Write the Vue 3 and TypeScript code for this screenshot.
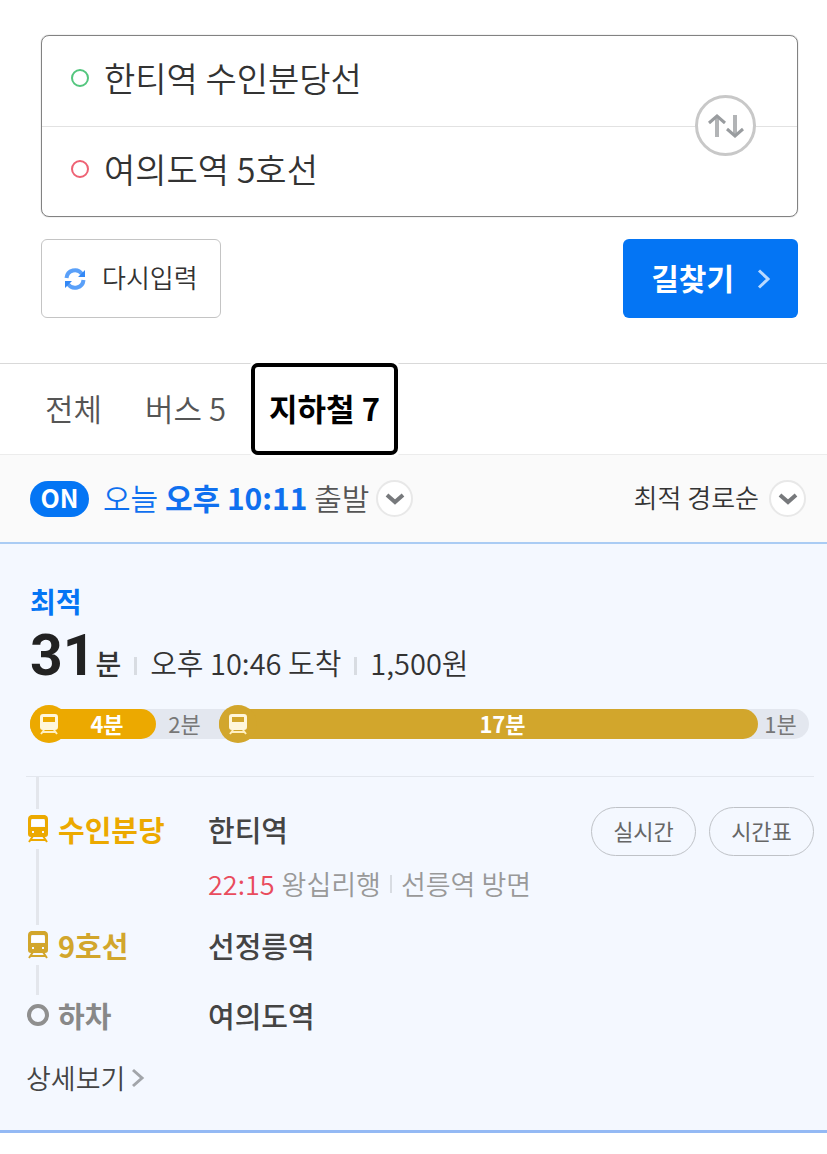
<script setup lang="ts">
import { ref } from 'vue'

interface Segment {
  kind: 'train' | 'walk'
  minutes: number
  share: number
  line?: string
}

interface Step {
  kind: 'train' | 'end'
  label: string
  station: string
  line: string
}

const origin = ref('한티역 수인분당선')
const destination = ref('여의도역 5호선')
const activeTab = ref('subway')

const tabs = [
  { id: 'all', label: '전체' },
  { id: 'bus', label: '버스 5' },
  { id: 'subway', label: '지하철 7' },
]

const segments: Segment[] = [
  { kind: 'train', minutes: 4, share: 126, line: 'suin' },
  { kind: 'walk', minutes: 2, share: 63 },
  { kind: 'train', minutes: 17, share: 539, line: 'nine' },
  { kind: 'walk', minutes: 1, share: 51 },
]

const steps: Step[] = [
  { kind: 'train', label: '수인분당', station: '한티역', line: 'suin' },
  { kind: 'train', label: '9호선', station: '선정릉역', line: 'nine' },
  { kind: 'end', label: '하차', station: '여의도역', line: 'end' },
]

function swap() {
  const previous = origin.value
  origin.value = destination.value
  destination.value = previous
}

function reset() {
  origin.value = ''
  destination.value = ''
}
</script>

<template>
  <main class="page">
    <form class="search" @submit.prevent>
      <div class="fields">
        <label class="field">
          <span class="ring start"></span>
          <input v-model="origin" type="text" aria-label="출발지" />
        </label>
        <label class="field">
          <span class="ring goal"></span>
          <input v-model="destination" type="text" aria-label="도착지" />
        </label>
        <button class="swap" type="button" aria-label="출발지와 도착지 바꾸기" @click="swap">
          <svg width="36" height="26" viewBox="0 0 36 26" fill="none" stroke-width="4">
            <path d="M9 3V24M27 2V23" stroke="#b2b4b6" />
            <path d="M1 10L9 3L17 10M19 16L27 23L35 16" stroke="#999c9f" stroke-width="3" />
          </svg>
        </button>
      </div>
      <div class="actions">
        <button class="reset" type="button" @click="reset">
          <svg width="22" height="22" viewBox="0 0 22 22" fill="none">
            <path d="M2.5 10A8.5 8.5 0 0 1 18 6M19.500 12A8.500 8.500 0 0 1 4 16" stroke="#5aa0f9" stroke-width="4" />
            <path d="M21 2V9H14ZM1 20V13H8Z" fill="#3388f6" />
          </svg>
          <span class="caption">다시입력</span>
        </button>
        <button class="find" type="submit">
          <span class="caption">길찾기</span>
          <svg width="14" height="20" viewBox="0 0 14 20" fill="none">
            <path d="M2 1.500L11 10L2 18.500" stroke="#b9d9ff" stroke-width="3" />
          </svg>
        </button>
      </div>
    </form>

    <nav class="tabs">
      <button
        v-for="tab in tabs"
        :key="tab.id"
        type="button"
        class="tab"
        :class="{ active: tab.id === activeTab }"
        @click="activeTab = tab.id"
      >
        <span class="caption">{{ tab.label }}</span>
      </button>
    </nav>

    <div class="options">
      <button class="option" type="button">
        <span class="on">ON</span>
        <span class="when caption"><span class="blue">오늘 <b>오후 10:11</b></span> 출발</span>
        <span class="drop">
          <svg width="20" height="12" viewBox="0 0 20 12" fill="none">
            <path d="M2 2L10 9L18 2" stroke="#77797c" stroke-width="4" />
          </svg>
        </span>
      </button>
      <button class="option sort" type="button">
        <span class="caption">최적 경로순</span>
        <span class="drop">
          <svg width="20" height="12" viewBox="0 0 20 12" fill="none">
            <path d="M2 2L10 9L18 2" stroke="#77797c" stroke-width="4" />
          </svg>
        </span>
      </button>
    </div>

    <article class="route">
      <h2 class="badge">최적</h2>
      <p class="summary">
        <strong class="total">31</strong>
        <span class="unit">분</span>
        <i class="bar"></i>
        <span>오후 10:46 도착</span>
        <i class="bar"></i>
        <span>1,500원</span>
      </p>

      <div class="track">
        <div
          v-for="(segment, index) in segments"
          :key="index"
          class="segment"
          :class="[segment.kind, segment.line]"
          :style="{ flexGrow: segment.share }"
        >
          <span v-if="segment.kind === 'train'" class="knob">
            <svg width="20" height="22" viewBox="0 0 20 22">
              <path
                fill="#fff6db"
                fill-rule="evenodd"
                d="M4 1H16Q19 1 19 4V14Q19 17 16 17H4Q1 17 1 14V4Q1 1 4 1ZM4 4V9H16V4Z"
              />
              <path d="M5 17L2 21M15 17L18 21M4 19H16" stroke="#fff0c2" stroke-width="2" />
            </svg>
          </span>
          <span class="minutes caption">{{ segment.minutes }}분</span>
        </div>
      </div>

      <div class="detail">
        <ol class="steps">
          <li v-for="step in steps" :key="step.label" class="step" :class="step.line">
            <span class="marker">
              <svg v-if="step.kind === 'train'" width="22" height="28" viewBox="0 0 22 28">
                <path
                  fill="currentColor"
                  fill-rule="evenodd"
                  d="M4 0H18Q21 1 21 4V19Q21 22 18 22H4Q1 22 1 19V4Q1 1 4 0ZM5 4Q4 4 4 6V12H18V6Q18 4 17 4ZM5 16V18H7V16ZM15 16V18H17V16Z"
                />
                <path d="M5 5H17V11H5Z" fill="#fff" />
                <path d="M6 21L2 27M16 21L20 27M3 25H19" stroke="currentColor" stroke-width="2" />
              </svg>
              <span v-else class="stop"></span>
            </span>
            <b class="line">{{ step.label }}</b>
            <div class="place">
              <span class="station">{{ step.station }}</span>
              <p v-if="step.line === 'suin'" class="next">
                <span class="time">22:15</span> 왕십리행<i class="bar thin"></i>선릉역 방면
              </p>
            </div>
            <div v-if="step.line === 'suin'" class="pills">
              <button class="pill" type="button"><span class="caption">실시간</span></button>
              <button class="pill" type="button"><span class="caption">시간표</span></button>
            </div>
          </li>
        </ol>
        <a class="more" href="#">
          상세보기
          <svg width="14" height="20" viewBox="0 0 14 20" fill="none">
            <path d="M2 2L11 10L2 18" stroke="#a2a5aa" stroke-width="3" />
          </svg>
        </a>
      </div>
    </article>
  </main>
</template>

<style>
body {
  background: #fff;
}
</style>

<style scoped>
.page,
.page button,
.page input {
  font-family: 'Noto Sans CJK KR', 'Noto Sans', sans-serif;
}
.page {
  color: #444;
}
.page * {
  box-sizing: border-box;
}
button {
  margin: 0;
  padding: 0;
  border: 0;
  background: none;
  color: inherit;
  cursor: pointer;
}
svg {
  display: block;
  flex: none;
}
.caption {
  display: block;
  padding-bottom: 4px;
}
.search {
  padding: 35px 29px 45px 41px;
}
.fields {
  position: relative;
  border: 1px solid #828282;
  border-radius: 8px;
  box-shadow: 0 0 1px #828282;
}
.field {
  display: flex;
  align-items: center;
  gap: 15px;
  height: 90px;
  padding: 0 110px 6px 29px;
}
.field + .field {
  border-top: 1px solid #e2e2e2;
}
.ring {
  flex: none;
  width: 18px;
  height: 18px;
  border: 2px solid #54c67e;
  border-radius: 50%;
}
.ring.goal {
  border-color: #ee6274;
}
.field input {
  flex: 1;
  min-width: 0;
  padding: 0;
  border: 0;
  outline: 0;
  background: none;
  color: #333;
  font-size: 34px;
  font-weight: 350;
  line-height: 50px;
}
.swap {
  position: absolute;
  top: 59px;
  right: 41px;
  display: flex;
  align-items: center;
  justify-content: center;
  width: 61px;
  height: 61px;
  border: 3px solid #c8c8c8;
  border-radius: 50%;
  background: #fff;
}
.actions {
  display: flex;
  justify-content: space-between;
  margin-top: 22px;
}
.reset,
.find {
  display: flex;
  align-items: center;
  height: 79px;
  border-radius: 6px;
}
.reset {
  gap: 16px;
  padding: 0 22px;
  border: 1px solid #c4c4c4;
  color: #333;
  font-size: 26px;
  font-weight: 350;
}
.find {
  gap: 23px;
  padding: 0 27px 0 28px;
  background: #0475f4;
  color: #fff;
  font-size: 30px;
  font-weight: 700;
}
.tabs {
  display: flex;
  gap: 7px;
  height: 91px;
  padding-left: 27px;
  border-top: 1px solid #d9d9d9;
}
.tab {
  padding: 0 18px;
  color: #555;
  font-size: 31px;
  font-weight: 350;
}
.tab.active {
  position: relative;
  margin: -1px 0;
  padding: 0 14px;
  border: 4px solid #000;
  border-radius: 7px;
  box-shadow: 0 0 0 3px #fff;
  color: #000;
  font-weight: 700;
}
.options {
  display: flex;
  align-items: center;
  justify-content: space-between;
  height: 88px;
  padding: 0 21px 0 30px;
  border-top: 1px solid #ececec;
  background: #fafafa;
}
.option {
  display: flex;
  align-items: center;
  gap: 7px;
}
.on {
  width: 59px;
  height: 36px;
  margin-right: 7px;
  border-radius: 18px;
  background: #0475f4;
  color: #fff;
  font-size: 25px;
  font-weight: 700;
  line-height: 32px;
  text-align: center;
}
.when {
  color: #555;
  font-size: 30px;
  font-weight: 350;
  line-height: 36px;
}
.blue {
  color: #0f70ef;
}
.blue b {
  font-weight: 700;
}
.drop {
  display: flex;
  align-items: center;
  justify-content: center;
  width: 37px;
  height: 37px;
  border: 2px solid #e8e8e8;
  border-radius: 50%;
  background: #fff;
}
.sort {
  gap: 10px;
  color: #333;
  font-size: 26px;
  font-weight: 350;
}
.route {
  padding: 36px 13px 32px 30px;
  border-top: 2px solid #aaccf4;
  border-bottom: 3px solid #94b9f4;
  background: #f4f8ff;
}
.badge {
  margin: 0;
  color: #0475f4;
  font-size: 28px;
  font-weight: 700;
  line-height: 42px;
}
.summary {
  display: flex;
  align-items: baseline;
  height: 72px;
  margin: 2px 0 0;
  color: #333;
  font-size: 29px;
  font-weight: 350;
  line-height: 64px;
}
.total {
  color: #222;
  font-family: Roboto, sans-serif;
  font-size: 57px;
  font-weight: 700;
}
.unit {
  font-size: 28px;
  font-weight: 500;
}
.bar {
  width: 3px;
  height: 18px;
  margin: 0 13px;
  background: #d8dce2;
}
.track {
  display: flex;
  height: 30px;
  margin: 13px 5px 0 0;
  border-radius: 15px;
  background: #e3e7ef;
}
.segment {
  display: flex;
  flex-basis: 0;
  align-items: center;
  border-radius: 15px;
  font-size: 22px;
  line-height: 30px;
}
.knob {
  display: flex;
  flex: none;
  align-items: center;
  justify-content: center;
  width: 38px;
  height: 38px;
  margin: -4px 0;
  border-radius: 50%;
  background: inherit;
}
.segment.suin {
  background: #eca900;
}
.segment.nine {
  background: #d2a62c;
}
.minutes {
  flex: 1;
  padding-bottom: 2px;
  text-align: center;
}
.train .minutes {
  padding-right: 10px;
  color: #fff;
  font-weight: 700;
}
.walk .minutes {
  padding-right: 6px;
  color: #777;
  font-weight: 400;
}
.detail {
  margin: 37px 0 0 -4px;
  border-top: 1px solid #e3e7ee;
}
.steps {
  margin: 0;
  padding: 0;
  list-style: none;
}
.step {
  position: relative;
  display: flex;
  align-items: flex-start;
  padding-bottom: 30px;
  font-size: 29px;
  line-height: 40px;
}
.step::before {
  position: absolute;
  top: 0;
  bottom: 0;
  left: 10px;
  width: 3px;
  background: #e3e6ec;
  content: '';
}
.step.suin {
  padding-top: 32px;
  padding-bottom: 21px;
}
.step.end {
  padding-bottom: 0;
}
.marker {
  position: relative;
  display: flex;
  flex: none;
  align-items: center;
  justify-content: center;
  width: 23px;
  height: 40px;
  margin-right: 9px;
  background: #f4f8ff;
}
.suin .marker,
.suin .line {
  color: #eca900;
}
.nine .marker,
.nine .line {
  color: #d2a62c;
}
.stop {
  width: 22px;
  height: 22px;
  border: 4px solid #8f8f8f;
  border-radius: 50%;
}
.line {
  flex: none;
  width: 150px;
  color: #888;
  font-weight: 700;
}
.place {
  flex: 1;
}
.station {
  color: #444;
  font-weight: 500;
}
.next {
  display: flex;
  align-items: center;
  gap: 7px;
  margin: 15px 0 0;
  color: #999;
  font-size: 27px;
  font-weight: 350;
}
.time {
  color: #e94c5d;
}
.bar.thin {
  width: 2px;
  margin: 0 2px;
}
.pills {
  display: flex;
  gap: 13px;
  margin-top: -2px;
}
.pill {
  width: 105px;
  height: 49px;
  border: 1px solid #bfc2c7;
  border-radius: 25px;
  color: #666;
  font-size: 22px;
}
.more {
  display: inline-flex;
  align-items: center;
  gap: 6px;
  margin-top: 23px;
  color: #444;
  font-size: 27px;
  font-weight: 350;
  line-height: 40px;
  text-decoration: none;
}
</style>
